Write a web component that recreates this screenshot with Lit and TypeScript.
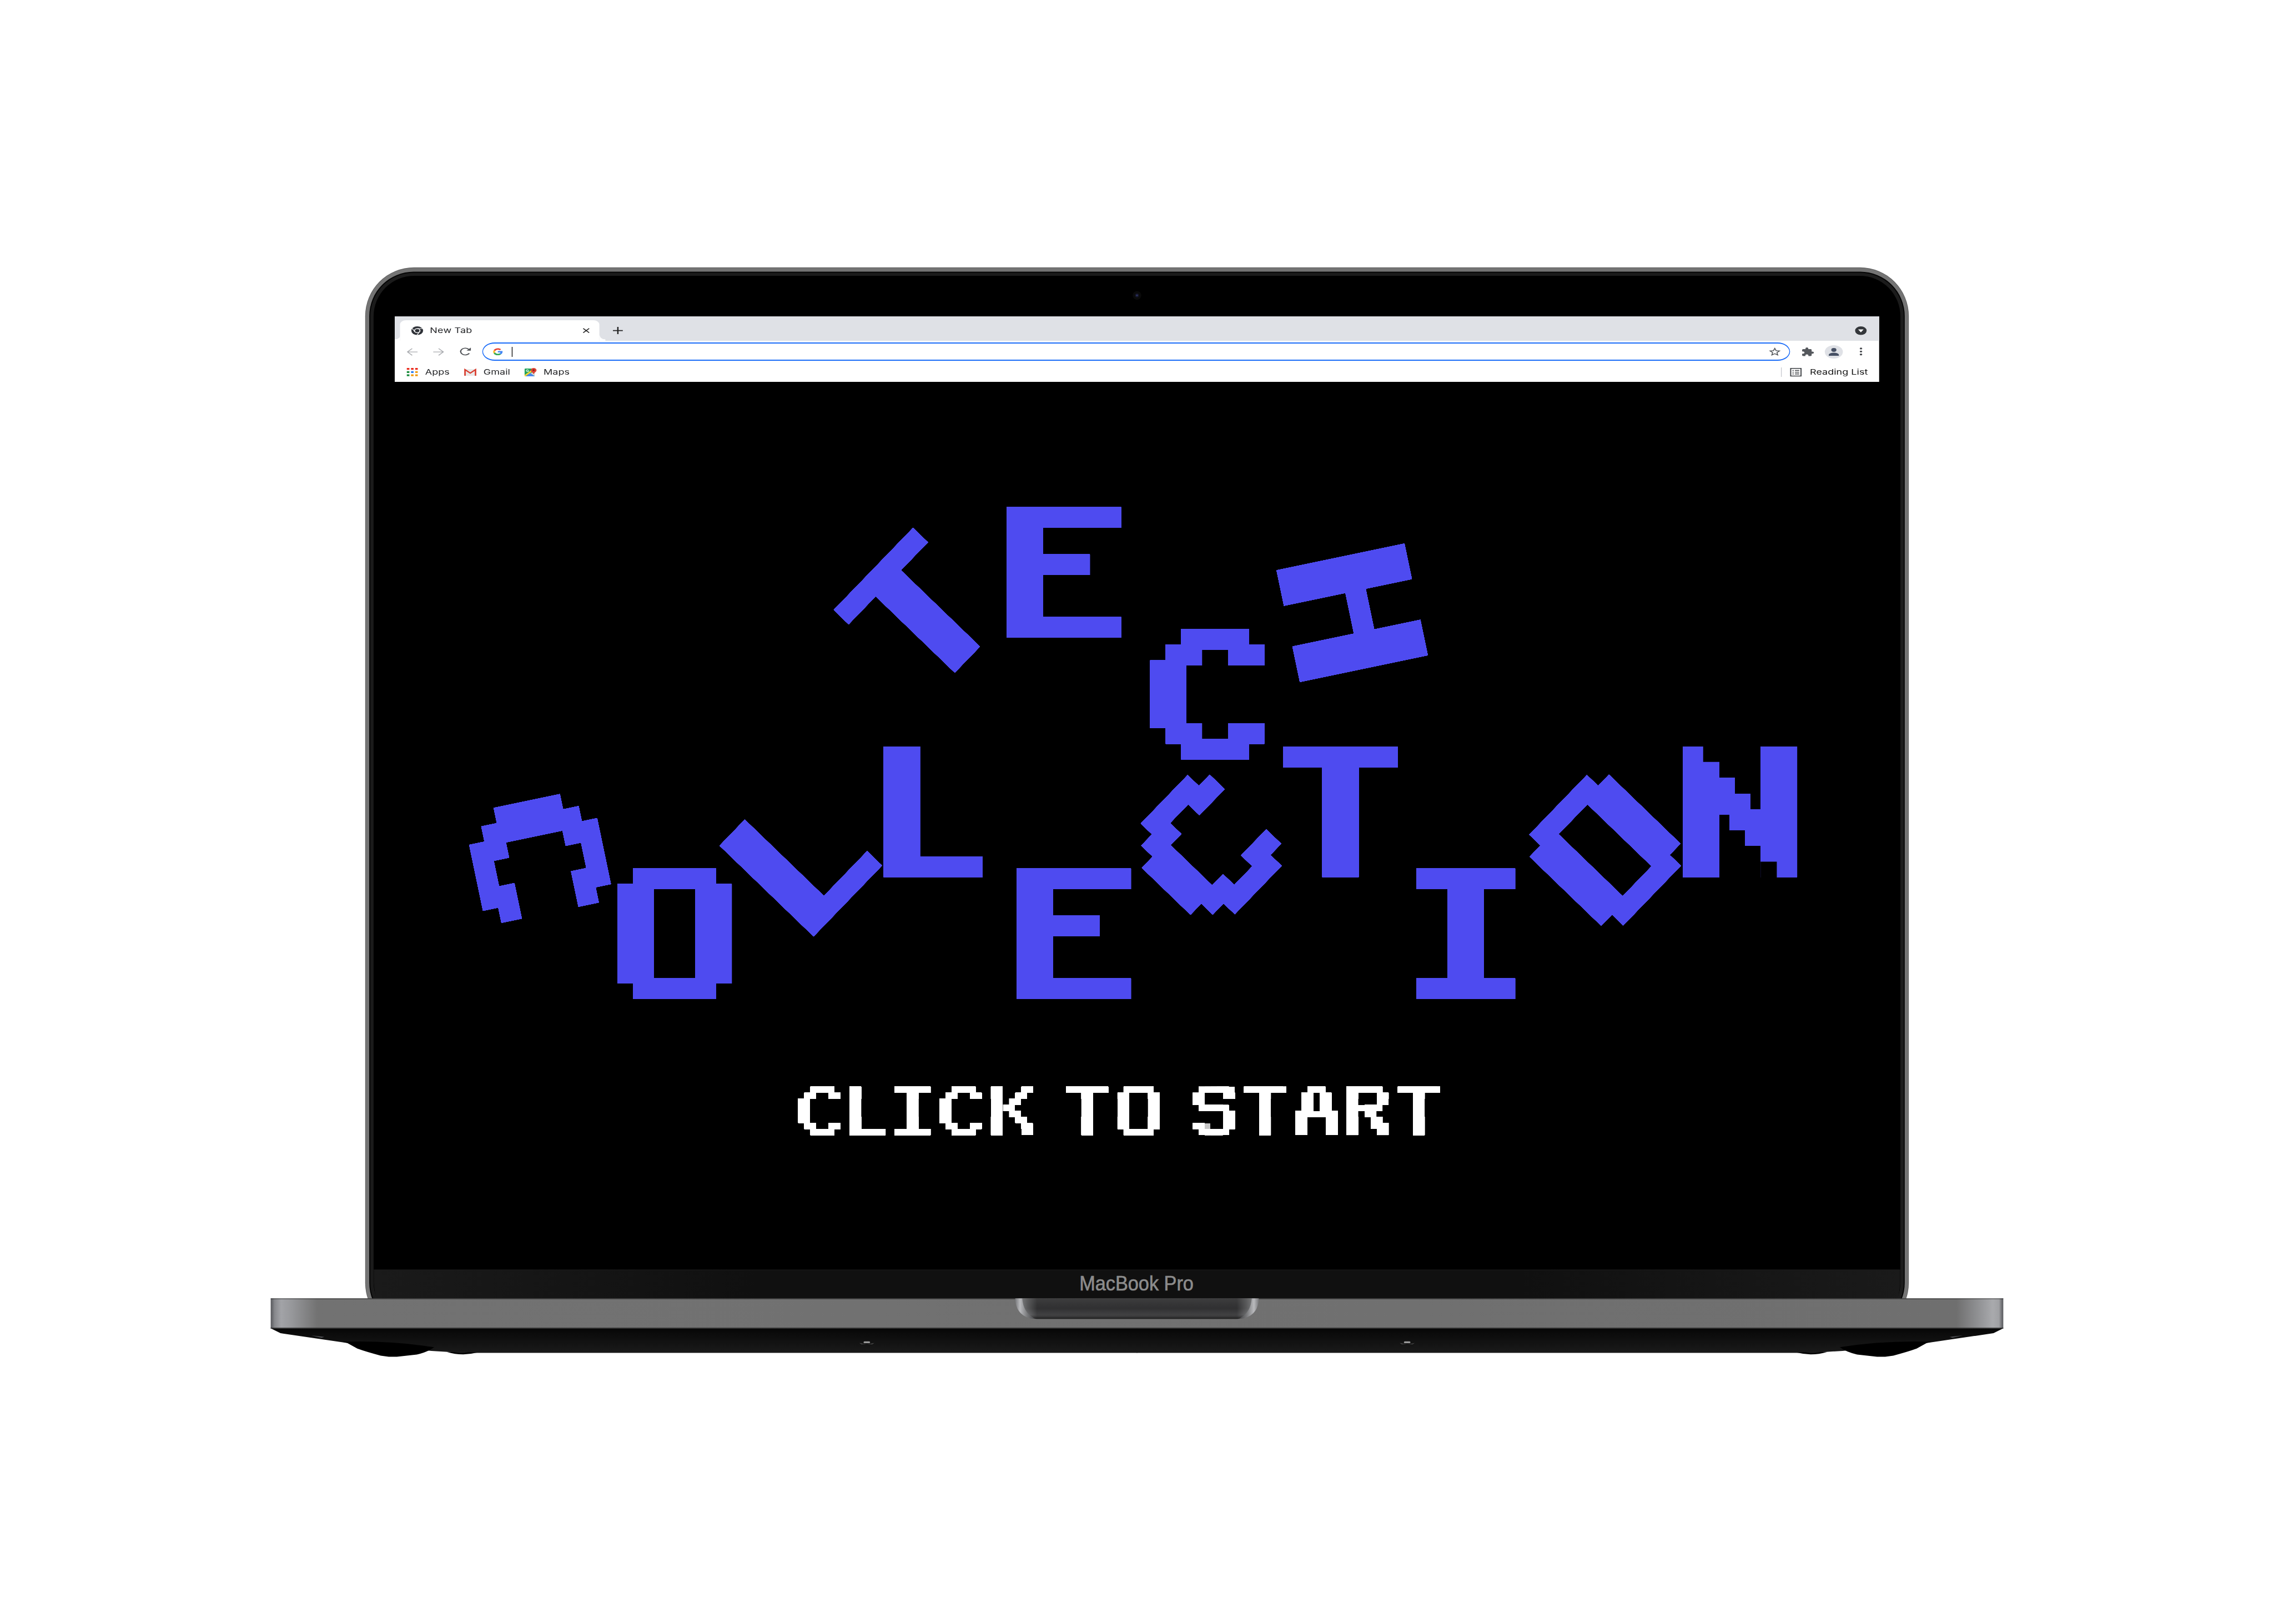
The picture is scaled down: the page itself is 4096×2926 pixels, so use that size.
import { LitElement, html, svg, css, nothing } from "lit";
import { customElement } from "lit/decorators.js";

/* Ink box of a glyph in em units, and how far it overhangs the pixel lattice, in cells. */
interface Face {
  font: string;
  weight: number;
  ink: [number, number, number, number];
  over: [number, number, number, number];
  grid: string;
  span: number;
}

const f = (font: string, weight: number, ink: any, over: any, grid = "g6", span = 5): Face => ({ font, weight, ink, over, grid, span });

const FACES: Record<string, Face> = {
  E: f("DejaVu Sans", 400, [0.0975, 0.5675, -0.73, 0], [0.7, 0.2, 0.2, 0.1], "gE"),
  C: f("DejaVu Sans", 400, [0.055, 0.645, -0.7425, 0.015], [0.3, 0.1, 0.4, 0.4]),
  H: f("DejaVu Sans", 300, [0.1225, 0.6275, -0.73, 0], [0.15, 0.15, 0.4, 0.1]),
  T: f("DejaVu Sans", 300, [0.0225, 0.59, -0.73, 0], [0.1, 0.1, 0.2, 0.1], "g11"),
  O: f("DejaVu Sans", 400, [0.055, 0.73, -0.7425, 0.015], [0.95, 0.95, 0.7, 0.7]),
  L: f("DejaVu Sans", 300, [0.1225, 0.525, -0.73, 0], [0.14, 0.1, 0.1, 0.15], "g5", 4),
  I: f("DejaVu Sans Mono", 300, [0.0975, 0.5025, -0.73, 0], [0.1, 0.1, 0.2, 0.15], "g5", 4),
  N: f("Roboto", 300, [0.09, 0.62, -0.71, 0], [0.6, 0.6, 0.1, 0.1], "gN"),
  K: f("Noto Sans", 300, [0.1, 0.5875, -0.715, 0], [0.1, 1.1, 0.5, 0.3]),
  S: f("Liberation Sans", 300, [0.045, 0.62, -0.6975, 0.01], [0.7, 0.7, 0.7, 0.2], "gS"),
  A: f("DejaVu Sans Mono", 300, [0.0175, 0.5825, -0.73, 0], [1.3, 1.3, 1.3, 0.1], "gA"),
  R: f("Noto Sans", 400, [0.0975, 0.605, -0.715, 0], [0.2, 0.95, 0.8, 0.1]),
};

const SX = 28.8;
const SY = 29;

const dots = (cols: number, half = 1, skip: (i: number, j: number) => boolean = () => false) => {
  let d = "";
  const x0 = (-(cols - 1) * half * SX) / 2;
  for (let j = 0; j < 8; j++)
    for (let i = 0; i < cols; i++)
      if (!skip(i, j)) d += `M${(x0 + i * half * SX - 2).toFixed(2)} ${(-3.5 * SY + j * SY - 2).toFixed(2)}h4v4h-4z`;
  return d;
};

/* Sampling lattices; some leave out cells where a glyph's strokes would run together. */
const GRIDS: [string, string][] = [
  ["g6", dots(6)],
  ["gE", dots(6, 1, (i, j) => i > 3 && j > 0 && j < 7)],
  ["gN", dots(6, 1, (i, j) => i > 0 && i < 5 && i !== j - 1)],
  ["gS", dots(6, 1, (i, j) => (j === 2 && i > 0) || ((j === 4 || j === 5) && i < 5))],
  ["gA", dots(6, 1, (i, j) => j === 1 && (i === 2 || i === 3))],
  ["g5", dots(5)],
  ["g11", dots(11, 0.5)],
];

const glyph = (ch: string, filter: string) => {
  const a = FACES[ch];
  const kx = ((a.span + a.over[0] + a.over[1]) * SX) / ((a.ink[1] - a.ink[0]) * 100);
  const ky = ((7 + a.over[2] + a.over[3]) * SY) / ((a.ink[3] - a.ink[2]) * 100);
  const tx = (-a.span / 2 - a.over[0]) * SX - a.ink[0] * 100 * kx;
  const ty = (-3.5 - a.over[2]) * SY - a.ink[2] * 100 * ky;
  return svg`<g clip-path="${ch === "N" ? "url(#notched)" : nothing}"><g filter="url(#${filter})"><g mask="url(#${a.grid})"><text
    font-family="${a.font}" font-weight="${a.weight}" font-size="100"
    transform="matrix(${kx} 0 0 ${ky} ${tx} ${ty})">${ch}</text></g></g></g>`;
};

const TITLE: [string, number, number, number][] = [
  ["T", 1699.9, 1134.8, -46], ["E", 1965, 1057.5, 0], ["C", 2229.7, 1282.7, 0], ["H", 2497.4, 1132.1, 78.2],
  ["C", 994.5, 1583, 78.2], ["O", 1246, 1725, 0], ["L", 1479.1, 1580.7, -46], ["L", 1723.3, 1500, 0],
  ["E", 1983.3, 1725, 0], ["C", 2227.1, 1570.8, -46], ["T", 2475.8, 1500, 0], ["I", 2707.3, 1725, 0],
  ["O", 2964.5, 1570.7, -46], ["N", 3213.7, 1500, 0],
];

const PROMPT: [string, number][] = [
  ["C", 1513.1], ["L", 1602.3], ["I", 1685.5], ["C", 1774.3], ["K", 1869.1], ["T", 2008.1], ["O", 2103],
  ["S", 2242], ["T", 2336.4], ["A", 2431.6], ["R", 2525.7], ["T", 2620.5],
];

@customElement("laptop-body")
export class LaptopBody extends LitElement {
  static styles = css`
    :host { display: block; }
    svg { display: block; width: 4200px; height: 3000px; }
    .model { font-family: "Liberation Sans", Arial, sans-serif; font-size: 37px; fill: #8b8b8b; stroke: #8b8b8b; stroke-width: .7px; }
  `;
  render() {
    const underside = svg`
      <path d="M500 2454L518 2463L640 2481L797 2495.7L827 2497.7L880 2499.3H2100.500V2454z" fill="url(#under)"/>
      <path d="M632 2479Q720 2476 802 2489Q790 2498 770 2502.5L733 2506.6H718L703 2504.5Q675 2497 660 2491.500L641 2481z" fill="#000"/>
      <path d="M825 2497.500Q853 2506 881 2499z" fill="#000"/>
      <path d="M575 2467l24 3l-5 1.500z" fill="#55565a"/>
      <path d="M1587 2481q14 5 28 0l-4 2.500h-20z" fill="#555"/>
      <rect x="1595" y="2478" width="12" height="3.500" rx="1.700" fill="#999"/>`;
    return html`<svg viewBox="0 0 4200 3000">
      <defs>
        <clipPath id="lid"><rect x="600" y="400" width="3000" height="1999.500"/></clipPath>
        <linearGradient id="under" gradientUnits="userSpaceOnUse" x1="0" y1="2454" x2="0" y2="2499"><stop offset="0" stop-color="#050505"/><stop offset=".2" stop-color="#0b0b0b"/><stop offset="1" stop-color="#1a1a1a"/></linearGradient>
        <linearGradient id="chin"><stop offset="0" stop-color="#1a1a1a"/><stop offset=".25" stop-color="#101010"/><stop offset=".75" stop-color="#101010"/><stop offset="1" stop-color="#1a1a1a"/></linearGradient>
        <linearGradient id="base" gradientUnits="userSpaceOnUse" x1="500" x2="3700" y1="0" y2="0">
          <stop offset="0" stop-color="#55565a"/><stop offset=".0022" stop-color="#86878b"/><stop offset=".006" stop-color="#a2a3a7"/><stop offset=".012" stop-color="#97989b"/><stop offset=".027" stop-color="#727272"/>
          <stop offset=".973" stop-color="#6f6f6f"/><stop offset=".988" stop-color="#97989b"/><stop offset=".994" stop-color="#a9aaad"/><stop offset=".9975" stop-color="#a0a1a4"/><stop offset="1" stop-color="#55565a"/>
        </linearGradient>
        <linearGradient id="notch">
          <stop offset="0" stop-color="#77787b"/><stop offset=".02" stop-color="#b9babd"/><stop offset=".05" stop-color="#77787a"/><stop offset=".09" stop-color="#38383a"/>
          <stop offset=".91" stop-color="#38383a"/><stop offset=".95" stop-color="#77787a"/><stop offset=".98" stop-color="#b9babd"/><stop offset="1" stop-color="#77787b"/>
        </linearGradient>
        <linearGradient id="shade" x1="0" y1="0" x2="0" y2="1"><stop offset="0" stop-color="#444" stop-opacity=".5"/><stop offset=".5" stop-color="#222" stop-opacity=".35"/><stop offset=".8" stop-color="#555" stop-opacity=".3"/><stop offset="1" stop-color="#111" stop-opacity=".75"/></linearGradient>
      </defs>
      <g clip-path="url(#lid)">
        <rect x="674.500" y="494" width="2851" height="1966" rx="90" fill="#5f5f5f"/>
        <rect x="675.500" y="495" width="2849" height="1964" rx="89" fill="#747474"/>
        <rect x="682" y="502" width="2836" height="1950" rx="82" fill="#050505"/>
        <rect x="684" y="504" width="2832" height="1946" rx="80" fill="#1b1b1b"/>
        <rect x="690" y="509.500" width="2820" height="1935" rx="75" fill="#000"/>
        <path d="M690.500 2345.700H3509.500V2371Q3508 2390 3504.500 2400H695.500Q692 2390 690.500 2371z" fill="url(#chin)"/>
        <rect x="690.500" y="2345.700" width="2819" height="1" fill="#1c1c1c"/>
      </g>
      <circle cx="2100" cy="545.700" r="8" fill="#0a0a0a"/><circle cx="2100" cy="545.700" r="3.500" fill="#15172a"/><circle cx="2100" cy="545.700" r="1.500" fill="#30356a"/>
      ${underside}
      <g transform="matrix(-1 0 0 1 4200 0)">${underside}</g>
      <rect x="500" y="2398.700" width="3200" height="55.600" fill="url(#base)"/>
      <rect x="500" y="2398.700" width="3200" height="1.600" fill="#000" opacity=".45"/>
      <rect x="500" y="2453" width="3200" height="1.500" fill="#222"/>
      <path d="M1875 2398.700H2325Q2324 2428 2299 2435Q2295 2436.500 2287 2436.500H1913Q1905 2436.500 1901 2435Q1876 2428 1875 2398.700z" fill="url(#notch)"/>
      <path d="M1888 2398.700H2312Q2310 2424 2292 2434Q2290 2436.500 2285 2436.500H1915Q1910 2436.500 1908 2434Q1890 2424 1888 2398.700z" fill="url(#shade)"/>
      <text class="model" x="1993.500" y="2384.300" textLength="211" lengthAdjust="spacingAndGlyphs">MacBook Pro</text>
    </svg>`;
  }
}

@customElement("start-screen")
export class StartScreen extends LitElement {
  static styles = css`
    :host { display: block; }
    svg { display: block; width: 4200px; height: 3000px; }
    .title { fill: #4e4bf0; }
    .prompt { fill: #fff; }
  `;
  render() {
    return html`<svg viewBox="0 0 4200 3000">
      <defs>
        <filter id="bold" filterUnits="userSpaceOnUse" x="-150" y="-160" width="300" height="320" color-interpolation-filters="sRGB">
          <feMorphology operator="dilate" radius="32 17.5"/>
          <feComponentTransfer><feFuncA type="linear" slope="6" intercept="-1.5"/></feComponentTransfer>
        </filter>
        <filter id="regular" filterUnits="userSpaceOnUse" x="-150" y="-160" width="300" height="320" color-interpolation-filters="sRGB">
          <feMorphology operator="dilate" radius="26.7 12.9"/>
          <feComponentTransfer><feFuncA type="linear" slope="6" intercept="-1.5"/></feComponentTransfer>
        </filter>
        <clipPath id="notched"><path clip-rule="evenodd" d="M-150-160H150V160H-150zM-68-130V-92.500H-38V-130zM38 92V130H68V92z"/></clipPath>
        ${GRIDS.map(([id, d]) => svg`<mask id="${id}" maskUnits="userSpaceOnUse" x="-150" y="-160" width="300" height="320"><path d="${d}" fill="#fff"/></mask>`)}
      </defs>
      <g class="title">${TITLE.map(([ch, x, y, r]) => svg`<g transform="translate(${x} ${y}) rotate(${r})">${glyph(ch, "bold")}</g>`)}</g>
      <g class="prompt">${PROMPT.map(([ch, x]) => svg`<g transform="translate(${x} 2052.3) scale(.391 .386)">${glyph(ch, "regular")}</g>`)}</g>
    </svg>`;
  }
}

@customElement("browser-bar")
export class BrowserBar extends LitElement {
  static styles = css`
    :host {
      display: flex; flex-direction: column; width: 2015.5px; height: 121.5px; box-sizing: border-box;
      background: #fff; font: 13.6px/16px Inter, "Liberation Sans", sans-serif; color: #222326;
      transform: scaleX(1.36); transform-origin: 0 0;
    }
    svg { display: block; flex: none; overflow: visible; }
    .tabs { display: flex; align-items: stretch; height: 45.4px; background: #dfe1e6; padding: 7.6px 18px 0 7.6px; box-sizing: border-box; }
    .tab { position: relative; display: flex; align-items: center; width: 270.6px; box-sizing: border-box; padding: 0 13px 0 14.6px; background: #fff; border-radius: 8px 8px 0 0; }
    .tab::before, .tab::after { content: ""; position: absolute; bottom: 0; width: 7.6px; height: 10px; }
    .tab::before { left: -7.6px; background: radial-gradient(circle at 0 0, transparent 7.4px, #fff 7.9px); }
    .tab::after { right: -7.6px; background: radial-gradient(circle at 100% 0, transparent 7.4px, #fff 7.9px); }
    .name { flex: 1; margin-left: 9.6px; letter-spacing: .1px; }
    .plus { align-self: center; margin-left: 18px; }
    .drop { align-self: center; margin-left: auto; margin-right: -2px; }
    .tools { display: flex; align-items: center; height: 40.4px; padding-left: 16.3px; }
    .fwd { margin-left: 21.6px; }
    .reload { margin-left: 21.3px; margin-right: 15.6px; }
    .omni { display: flex; align-items: center; width: 1776px; height: 33.6px; box-sizing: border-box; border: 2.3px solid #1a6cf8; border-left-width: 1.8px; border-right-width: 1.8px; border-radius: 17px; padding: 0 11.8px 0 13px; }
    .caret { width: 1.3px; height: 19px; margin-left: 12px; background: #111; }
    .star { margin-left: auto; }
    .puzzle { margin-left: 16px; }
    .face { margin-left: 15px; }
    .dots { margin-left: 22px; }
    .marks { display: flex; align-items: center; height: 35px; padding: 0 16px 0 16.3px; }
    .apps { margin-left: 10px; width: 52.7px; }
    .gmail { margin-left: 10px; width: 56.2px; }
    .maps { margin-left: 9.2px; }
    .rule { width: 1px; height: 18px; background: #c9cbd0; margin-left: auto; margin-right: 12px; }
    .list { margin-left: 11px; width: 77.6px; white-space: nowrap; color: #111; }
  `;
  render() {
    const cell = ["#ea2a1c", "#ea2a1c", "#ea2a1c", "#178a3a", "#2a7df0", "#f09a10", "#178a3a", "#f09a10", "#f09a10"];
    return html`
      <div class="tabs">
        <div class="tab">
          <svg width="16" height="16" viewBox="0 0 24 24"><circle cx="12" cy="12" r="12" fill="#2f3238"/><g fill="none" stroke="#fff" stroke-width="1.500"><circle cx="12" cy="12" r="5.600" stroke-width="2"/><path d="M12 6.200H23.500M7 14.800L1.700 5.600M17 14.800L11.600 24"/></g></svg>
          <span class="name">New Tab</span>
          <svg width="9.400" height="9.400" viewBox="0 0 10 10"><path d="M.7.7L9.300 9.300M9.300.7L.7 9.300" stroke="#222" stroke-width="1.500"/></svg>
        </div>
        <svg class="plus" width="13.400" height="13.400" viewBox="0 0 14 14"><path d="M7 0V14M0 7H14" stroke="#222" stroke-width="1.900"/></svg>
        <svg class="drop" width="16" height="16" viewBox="0 0 16 16"><circle cx="8" cy="8" r="8.400" fill="#eff0f3"/><circle cx="8" cy="8" r="7.900" fill="#34373b"/><path d="M4.300 5.600H11.700L8 11z" fill="#fff"/></svg>
      </div>
      <div class="tools">
        <svg width="14.600" height="14.600" viewBox="0 0 16 16" fill="none" stroke="#a9abaf" stroke-width="1.500"><path d="M16 8H1.200M8 1L1 8L8 15"/></svg>
        <svg class="fwd" width="14.600" height="14.600" viewBox="0 0 16 16" fill="none" stroke="#a9abaf" stroke-width="1.500"><path d="M0 8H14.800M8 1L15 8L8 15"/></svg>
        <svg class="reload" width="15.400" height="15" viewBox="0 0 16 16"><path d="M13.700 11.500A6.700 6.700 0 1 1 12.600 3.300L14.300 5" fill="none" stroke="#505357" stroke-width="1.800"/><path d="M16 .4V6.400H9.800z" fill="#505357"/></svg>
        <div class="omni">
          <svg width="13.500" height="14" viewBox="3 3 42 42"><path fill="#e8402f" d="M6.300 14.700l6.600 4.800C14.700 15.100 19 12 24 12c3.100 0 5.800 1.200 8 3l5.700-5.700C34 6.100 29.300 4 24 4 16.300 4 9.700 8.300 6.300 14.700z"/><path fill="#fbc02d" d="M6.300 14.700A20 20 0 0 0 6.200 33.200l6.500-5A12 12 0 0 1 12.900 19.500z"/><path fill="#34a853" d="M24 44c5.200 0 9.900-2 13.400-5.200l-6.200-5.200C29.200 35.100 26.700 36 24 36c-5.200 0-9.600-3.300-11.300-7.900l-6.500 5C9.500 39.600 16.200 44 24 44z"/><path fill="#4285f4" d="M43.600 20H24v8h11.300a12 12 0 0 1-4.100 5.600l6.200 5.200C37 39.200 44 34 44 24c0-1.300-.1-2.700-.4-4z"/></svg>
          <div class="caret"></div>
          <svg class="star" width="16" height="15.400" viewBox="2 2 20 19"><path fill="#505357" d="M22 9.240l-7.190-.62L12 2 9.190 8.630 2 9.240l5.460 4.730L5.820 21 12 17.270 18.180 21l-1.630-7.030L22 9.240zM12 15.400l-3.760 2.270 1-4.280-3.320-2.880 4.380-.38L12 6.100l1.710 4.040 4.380.38-3.320 2.880 1 4.280L12 15.400z"/></svg>
        </div>
        <svg class="puzzle" width="16" height="16" viewBox="2 1 21 21"><path fill="#55585d" d="M20.500 11H19V7c0-1.100-.9-2-2-2h-4V3.500a2.500 2.500 0 0 0-5 0V5H4c-1.100 0-1.990.9-1.990 2v3.800H3.500c1.490 0 2.700 1.210 2.700 2.700s-1.210 2.700-2.700 2.700H2V20c0 1.100.9 2 2 2h3.800v-1.500c0-1.490 1.210-2.700 2.700-2.700s2.700 1.210 2.700 2.700V22H17c1.100 0 2-.9 2-2v-4h1.500a2.500 2.500 0 0 0 0-5z"/></svg>
        <svg class="face" width="24.600" height="24.600" viewBox="0 0 24 24"><circle cx="12" cy="12" r="12" fill="#dfe1e6"/><circle cx="12" cy="8.500" r="3.400" fill="#465064"/><path d="M5.300 19V17.500C5.300 14.700 9 13.500 12 13.500S18.700 14.700 18.700 17.500V19z" fill="#465064"/></svg>
        <svg class="dots" width="4" height="15" viewBox="0 0 4 15" fill="#45484c"><circle cx="2" cy="2" r="1.700"/><circle cx="2" cy="7.500" r="1.700"/><circle cx="2" cy="13" r="1.700"/></svg>
      </div>
      <div class="marks">
        <svg width="15" height="15" viewBox="0 0 15 15">${cell.map((c, i) => svg`<rect x="${(i % 3) * 5.7}" y="${Math.floor(i / 3) * 5.9}" width="3.500" height="3.300" fill="${c}"/>`)}</svg>
        <span class="apps">Apps</span>
        <svg width="16.500" height="12.400" viewBox="0 0 16.500 12.400"><rect width="16.500" height="12.400" rx="1" fill="#e9e9e9"/><path d="M1.100 12.400V1L8.250 7.300L15.400 1V12.400" fill="none" stroke="#d93a2c" stroke-width="2"/></svg>
        <span class="gmail">Gmail</span>
        <svg width="16.200" height="16" viewBox="0 0 16.200 16"><rect y="1" width="13.500" height="14.500" rx="1" fill="#24a35a"/><path d="M1.500 15.500L8 9L13.500 15.500z" fill="#4a86ee"/><path d="M13.500 7L13.500 15L8 9.500z" fill="#dcdcdc"/><path d="M0 13.200L9.500 3.500L11.500 5.500L1.200 15.500H0z" fill="#fbd33b"/><path d="M12.300 0A3.900 3.900 0 0 1 16.200 4C16.200 7 13.300 8 12.300 11.500C11.300 8 8.400 7 8.400 4A3.900 3.900 0 0 1 12.300 0z" fill="#dd4437"/><circle cx="12.300" cy="4" r="1.400" fill="#7c1d16"/><path d="M5.200 3.900A1.700 1.700 0 1 0 5.600 5.200H4" fill="none" stroke="#fff" stroke-width=".9"/></svg>
        <span class="maps">Maps</span>
        <div class="rule"></div>
        <svg width="15.800" height="15.600" viewBox="0 0 16 16"><path d="M.8.8H15.200V15.200H.8z" fill="none" stroke="#3f4246" stroke-width="1.500"/><path d="M3.300 4.700H5M6.700 4.700H12.700M3.300 8H5M6.700 8H12.700M3.300 11.300H5M6.700 11.300H12.700" stroke="#3f4246" stroke-width="1.400"/></svg>
        <span class="list">Reading List</span>
      </div>`;
  }
}

@customElement("app-root")
export class AppRoot extends LitElement {
  static styles = css`
    :host { display: block; width: 4096px; height: 2926px; overflow: hidden; background: #fff; }
    .stage { zoom: 0.975238; display: grid; width: 4200px; height: 3000px; }
    .stage > * { grid-area: 1 / 1; }
    .window { margin: 584.3px 0 0 729px; }
  `;
  render() {
    return html`<div class="stage">
      <laptop-body></laptop-body>
      <start-screen></start-screen>
      <browser-bar class="window"></browser-bar>
    </div>`;
  }
}
